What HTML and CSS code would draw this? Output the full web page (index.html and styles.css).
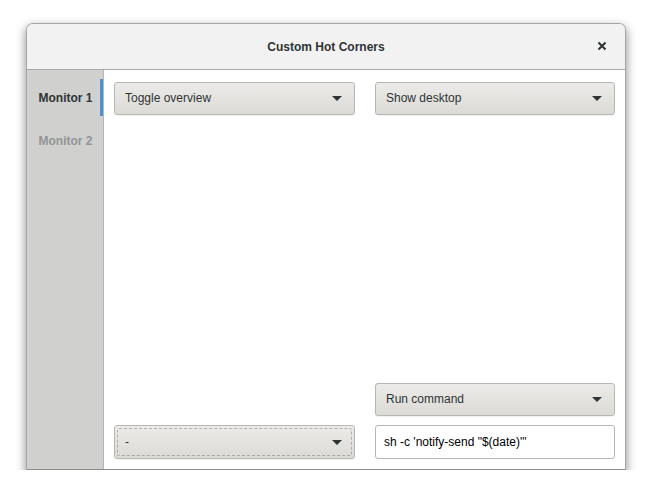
FILE: index.html
```html
<!DOCTYPE html>
<html lang="en">
<head>
  <meta charset="UTF-8">
  <title>Custom Hot Corners</title>
  <link rel="stylesheet" href="styles.css">
</head>
<body>

<div class="window">
  <div class="titlebar">
    <span class="title">Custom Hot Corners</span>
    <button class="close" aria-label="Close">
      <svg width="10" height="10" viewBox="0 0 10 10"><path d="M1.5 1.5 L8.5 8.5 M8.5 1.5 L1.5 8.5" stroke="#2e3436" stroke-width="2"/></svg>
    </button>
  </div>

  <div class="body">
    <div class="sidebar">
      <div class="side-row active">Monitor 1</div>
      <div class="side-row">Monitor 2</div>
    </div>

    <div class="corners">
      <div class="combo tl"><span>Toggle overview</span><i class="arrow"></i></div>
      <div class="combo tr"><span>Show desktop</span><i class="arrow"></i></div>
      <div class="combo br"><span>Run command</span><i class="arrow"></i></div>
      <div class="combo bl focused"><span>-</span><i class="arrow"></i></div>
      <div class="entry">sh -c 'notify-send "$(date)"'</div>
    </div>
  </div>
</div>

</body>
</html>
```

FILE: styles.css
```css
* {margin:0;padding:0;box-sizing:border-box;}
body {
  background: #fff;
  padding: 23px 0 0 26px;
  font-family: "Liberation Sans", Arial, sans-serif;
  font-size: 12px;
  color: #2e3436;
}
.window {
  width: 600px;
  height: 447px;
  border: 1px solid rgba(0,0,0,0.35);
  border-bottom-color: rgba(0,0,0,0.45);
  border-radius: 7px 7px 0 0;
  background: #fff;
  box-shadow: 0 4px 10px 1px rgba(0,0,0,0.4);
  display: flex;
  flex-direction: column;
  overflow: hidden;
}
.titlebar {
  height: 46px;
  flex: none;
  background: #f2f2f2;
  border-bottom: 1px solid #a8a8a6;
  display: flex;
  align-items: center;
  justify-content: center;
  position: relative;
}
.title {
  font-weight: bold;
  margin-top: 1px;
}
.close {
  position: absolute;
  right: 18px;
  top: 17px;
  width: 10px;
  height: 10px;
  border: none;
  background: none;
  display: flex;
}
.body {
  flex: 1;
  display: flex;
}
.sidebar {
  width: 77px;
  flex: none;
  background: #d0d0ce;
  border-right: 1px solid #b6b6b3;
  padding-top: 6px;
}
.side-row {
  height: 43px;
  display: flex;
  align-items: center;
  justify-content: center;
  font-weight: bold;
  color: #929595;
  padding-left: 1px;
}
.side-row.active {
  color: #2e3436;
  background: linear-gradient(#4a90d9,#4a90d9) right 3px / 3px calc(100% - 6px) no-repeat;
}
.corners {
  flex: 1;
  padding: 12px 10px 10px 10px;
  display: grid;
  grid-template-columns: 241px 240px;
  grid-template-rows: 33px 1fr 33px 34px;
  column-gap: 20px;
  row-gap: 9px;
}
.combo {
  border: 1px solid #b6b6b3;
  border-radius: 3px;
  background: linear-gradient(#edebe9, #dcdad5);
  box-shadow: 0 1px rgba(0,0,0,0.05);
  display: flex;
  align-items: center;
  justify-content: space-between;
  padding: 0 12px 1px 10px;
  position: relative;
}
.tl { grid-column: 1; grid-row: 1; }
.tr { grid-column: 2; grid-row: 1; }
.br { grid-column: 2; grid-row: 3; }
.bl { grid-column: 1; grid-row: 4; }
.entry { grid-column: 2; grid-row: 4; }
.arrow {
  width: 0;
  height: 0;
  border-left: 5px solid transparent;
  border-right: 5px solid transparent;
  border-top: 5px solid #2e3436;
  margin-top: 1px;
}
.focused::after {
  content: "";
  position: absolute;
  inset: 2px;
  border: 1px dashed rgba(46,52,54,0.3);
  border-radius: 2px;
}
.entry {
  border: 1px solid #b6b6b3;
  border-radius: 3px;
  background: #fff;
  color: #000;
  display: flex;
  align-items: center;
  padding: 0 8px 1px 8px;
}
```
